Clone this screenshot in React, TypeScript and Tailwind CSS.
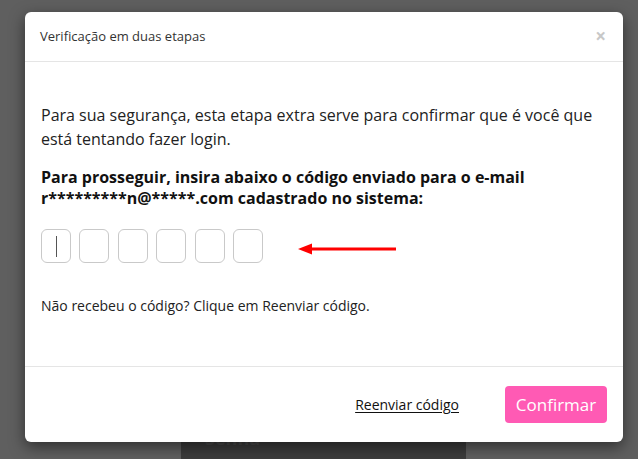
import { useState } from "react";

const font = { fontFamily: '"Open Sans", "Liberation Sans", sans-serif' };

function CodeInputs() {
  const [code] = useState(["", "", "", "", "", ""]);
  return (
    <div className="flex items-center">
      <div className="flex gap-[8.4px]">
        {code.map((c, i) => (
          <div
            key={i}
            className="w-[30px] h-[34px] rounded-[6px] border border-[#c9c9c9] bg-white flex items-center justify-center"
          >
            {i === 0 ? <div className="w-px h-[21px] bg-[#555]" /> : c}
          </div>
        ))}
      </div>
      {/* red arrow pointing at the inputs */}
      <svg width="100" height="12" viewBox="0 0 100 12" className="ml-[35px] mt-[5px]">
        <line x1="10" y1="6" x2="98" y2="6" stroke="#f00" strokeWidth="3" />
        <polygon points="0,6 14,0.5 14,11.5" fill="#f00" />
      </svg>
    </div>
  );
}

export default function App() {
  return (
    <div className="relative w-[638px] h-[459px] overflow-hidden bg-[#5f5f5f]" style={font}>
      {/* page behind the overlay */}
      <div className="absolute left-[181px] top-[442px] w-[285px] h-[40px] bg-[#3c3c3c] pl-[24px]">
        <span className="block -mt-[17px] text-[18px] font-bold text-[#4a4a4a]">Senha</span>
      </div>

      {/* modal */}
      <div className="absolute left-[25px] top-[12px] w-[598px] h-[430px] bg-white rounded-[6px] shadow-[0_5px_15px_rgba(0,0,0,0.5)] flex flex-col">
        <div className="h-[50px] flex items-center justify-between pl-[15px] pr-[17px] border-b border-[#e5e5e5]">
          <span className="text-[13px] text-[#333]">Verificação em duas etapas</span>
          <span className="text-[19px] leading-none font-bold text-[#c8c8c8]">×</span>
        </div>

        <div className="flex-1 px-[16px] pt-[41px]">
          <p className="text-[16px] leading-[24px] text-[#222]">
            Para sua segurança, esta etapa extra serve para confirmar que é você que está tentando fazer login.
          </p>
          <p className="mt-[16px] text-[16px] leading-[21px] font-bold text-[#111]">
            Para prosseguir, insira abaixo o código enviado para o e-mail r*********n@*****.com cadastrado no sistema:
          </p>
          <div className="mt-[20px]">
            <CodeInputs />
          </div>
          <p className="mt-[33px] text-[14px] leading-[20px] text-[#222]">
            Não recebeu o código? Clique em Reenviar código.
          </p>
        </div>

        <div className="h-[76px] border-t border-[#e5e5e5] flex items-center justify-end px-[16px] gap-[46px]">
          <a className="text-[14px] text-[#111] underline underline-offset-2 cursor-pointer">Reenviar código</a>
          <button className="w-[102px] h-[37px] rounded-[4px] bg-[#ff5ab4] text-white text-[17px]">
            Confirmar
          </button>
        </div>
      </div>
    </div>
  );
}
